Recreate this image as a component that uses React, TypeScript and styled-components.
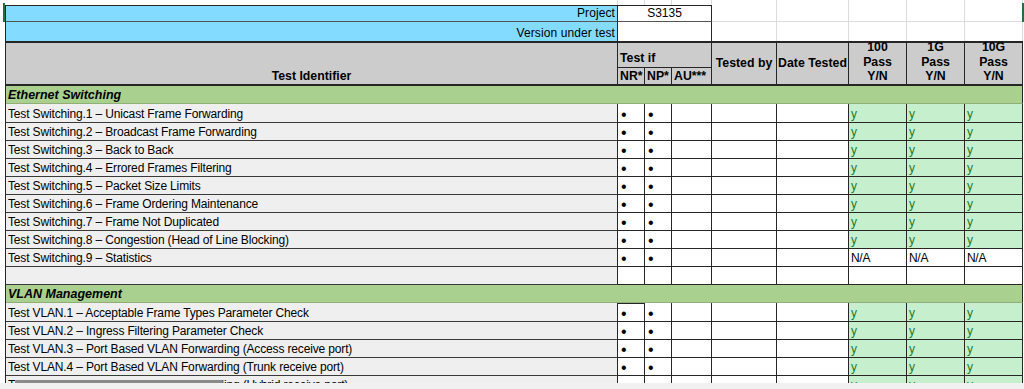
import React from "react";
import styled, { createGlobalStyle, css } from "styled-components";

const GlobalStyle = createGlobalStyle`
  html, body { margin: 0; padding: 0; background: #fff; overflow: hidden; }
  body { font-family: "Liberation Sans", Arial, sans-serif; color: #000; }
`;

const COLS = "612px 27px 27px 40px 65px 72px 58px 58px 58px";
const LINE = "#262626";
const GRID = "#dcdcdc";

const Sheet = styled.div`
  position: relative;
  width: 1024px;
  height: 389px;
  overflow: hidden;
  background: #fff;
  padding: 0 1px 0 5px;
  box-sizing: border-box;
`;

const GhostRow = styled.div`
  display: grid;
  grid-template-columns: ${COLS};
  height: 5px;
  margin-left: 1px;
`;

const GhostCell = styled.div`
  border-right: 1px solid ${GRID};
`;

const Row = styled.div<{ $h: number }>`
  display: grid;
  grid-template-columns: ${COLS};
  height: ${(p) => p.$h}px;
  border-left: 1px solid ${LINE};
  box-sizing: border-box;
`;

const cellBase = css`
  box-sizing: border-box;
  display: flex;
  align-items: flex-end;
  overflow: hidden;
  white-space: nowrap;
  font-size: 12px;
  line-height: 14px;
  padding: 0 2px 1px 2px;
  border-right: 1px solid ${LINE};
  border-bottom: 1px solid ${LINE};
`;

const InfoLabel = styled.div<{ $top?: boolean; $last?: boolean }>`
  ${cellBase};
  justify-content: flex-end;
  background: #83dcff;
  border-top: ${(p) => (p.$top ? `1px solid ${LINE}` : "none")};
  border-bottom: ${(p) => (p.$last ? "none" : `1px solid #555`)};
  letter-spacing: 0.1px;
`;

const InfoValue = styled.div<{ $top?: boolean; $last?: boolean }>`
  ${cellBase};
  grid-column: span 3;
  justify-content: center;
  background: #fff;
  border-top: ${(p) => (p.$top ? `1px solid ${LINE}` : "none")};
  border-bottom: ${(p) => (p.$last ? "none" : `1px solid #555`)};
`;

const SheetCell = styled.div<{ $last?: boolean }>`
  border-right: 1px solid ${GRID};
  border-bottom: ${(p) => (p.$last ? "none" : `1px solid ${GRID}`)};
`;

const Header = styled.div`
  display: grid;
  grid-template-columns: ${COLS};
  grid-template-rows: 25px 16px;
  border-top: 2px solid ${LINE};
  border-bottom: 2px solid ${LINE};
  border-left: 1px solid ${LINE};
  background: #cccccc;
`;

const HeadCell = styled.div<{
  $rows?: number;
  $cols?: number;
  $center?: boolean;
  $middle?: boolean;
  $bottomLine?: boolean;
  $stack?: boolean;
}>`
  box-sizing: border-box;
  display: flex;
  flex-direction: column;
  justify-content: ${(p) => (p.$middle ? "center" : "flex-end")};
  align-items: ${(p) => (p.$center ? "center" : "flex-start")};
  text-align: ${(p) => (p.$center ? "center" : "left")};
  grid-row: span ${(p) => p.$rows ?? 1};
  grid-column: span ${(p) => p.$cols ?? 1};
  border-right: 1px solid ${LINE};
  border-bottom: ${(p) => (p.$bottomLine ? `1px solid ${LINE}` : "none")};
  font-weight: bold;
  font-size: 12.3px;
  line-height: 14.7px;
  padding: 0 2px ${(p) => (p.$bottomLine ? 1 : 0)}px;
  overflow: ${(p) => (p.$stack ? "visible" : "hidden")};
  white-space: nowrap;
`;

const Band = styled.div`
  ${cellBase};
  grid-column: span 9;
  background: #a9d08e;
  border-bottom: 1px solid #8fae7a;
  font-weight: bold;
  font-style: italic;
  font-size: 12.5px;
  padding-left: 2px;
`;

const IdCell = styled.div`
  ${cellBase};
  background: #efefef;
  border-bottom-color: #3a3a3a;
  letter-spacing: -0.15px;
`;

const MarkCell = styled.div<{ $selected?: boolean }>`
  ${cellBase};
  background: #fff;
  font-size: 16px;
  line-height: 14px;
  padding: 0 0 0 3px;
  box-shadow: ${(p) => (p.$selected ? `inset 0 1px 0 ${LINE}` : "none")};
`;

const BlankCell = styled.div`
  ${cellBase};
  background: #fff;
`;

const PassCell = styled.div<{ $ok: boolean }>`
  ${cellBase};
  background: ${(p) => (p.$ok ? "#c6efce" : "#fff")};
  color: ${(p) => (p.$ok ? "#1f7a1f" : "#000")};
  letter-spacing: -0.3px;
`;

const Selection = styled.div<{ $side: "left" | "right" }>`
  position: absolute;
  top: 3px;
  ${(p) => (p.$side === "left" ? "left: 3px;" : "right: 0;")}
  width: 2px;
  height: 19px;
  background: #1e7145;
`;

const ScrollTrack = styled.div`
  position: absolute;
  left: 0;
  right: 0;
  bottom: 0;
  height: 6px;
  background: #f1f1f1;
`;

const ScrollThumb = styled.div`
  position: absolute;
  left: 15px;
  top: -3px;
  width: 208px;
  height: 3px;
  border-radius: 2px;
  background: #8a8a8a;
`;

type Test = { name: string; marks: boolean; pass: string };

const switching: Test[] = [
  { name: "Test Switching.1 \u2013 Unicast Frame Forwarding", marks: true, pass: "y" },
  { name: "Test Switching.2 \u2013 Broadcast Frame Forwarding", marks: true, pass: "y" },
  { name: "Test Switching.3 \u2013 Back to Back", marks: true, pass: "y" },
  { name: "Test Switching.4 \u2013 Errored Frames Filtering", marks: true, pass: "y" },
  { name: "Test Switching.5 \u2013 Packet Size Limits", marks: true, pass: "y" },
  { name: "Test Switching.6 \u2013 Frame Ordering Maintenance", marks: true, pass: "y" },
  { name: "Test Switching.7 \u2013 Frame Not Duplicated", marks: true, pass: "y" },
  { name: "Test Switching.8 \u2013 Congestion (Head of Line Blocking)", marks: true, pass: "y" },
  { name: "Test Switching.9 \u2013 Statistics", marks: true, pass: "N/A" },
  { name: "", marks: false, pass: "" },
];
const switchingHeights = [19, 18, 18, 18, 18, 18, 18, 18, 18, 18];

const vlan: Test[] = [
  { name: "Test VLAN.1 \u2013 Acceptable Frame Types Parameter Check", marks: true, pass: "y" },
  { name: "Test VLAN.2 \u2013 Ingress Filtering Parameter Check", marks: true, pass: "y" },
  { name: "Test VLAN.3 \u2013 Port Based VLAN Forwarding (Access receive port)", marks: true, pass: "y" },
  { name: "Test VLAN.4 \u2013 Port Based VLAN Forwarding (Trunk receive port)", marks: true, pass: "y" },
  { name: "Test VLAN.5 \u2013 Port Based VLAN Forwarding (Hybrid receive port)", marks: true, pass: "y" },
];
const vlanHeights = [19, 18, 18, 18, 18];

function TestRow({ t, h, selected }: { t: Test; h: number; selected?: boolean }) {
  const ok = t.pass === "y";
  return (
    <Row $h={h}>
      <IdCell>{t.name}</IdCell>
      <MarkCell $selected={selected}>{t.marks ? "\u2022" : ""}</MarkCell>
      <MarkCell>{t.marks ? "\u2022" : ""}</MarkCell>
      <BlankCell />
      <BlankCell />
      <BlankCell />
      <PassCell $ok={ok}>{t.pass}</PassCell>
      <PassCell $ok={ok}>{t.pass}</PassCell>
      <PassCell $ok={ok}>{t.pass}</PassCell>
    </Row>
  );
}

function PassHead({ speed }: { speed: string }) {
  return (
    <HeadCell $rows={2} $center $stack>
      <span>{speed}</span>
      <span>Pass</span>
      <span>Y/N</span>
    </HeadCell>
  );
}

export default function App() {
  return (
    <>
      <GlobalStyle />
      <Sheet>
        <GhostRow>
          {Array.from({ length: 9 }).map((_, i) => (
            <GhostCell key={i} />
          ))}
        </GhostRow>
        <Row $h={17}>
          <InfoLabel $top>Project</InfoLabel>
          <InfoValue $top>S3135</InfoValue>
          <SheetCell />
          <SheetCell />
          <SheetCell />
          <SheetCell />
          <SheetCell />
        </Row>
        <Row $h={19}>
          <InfoLabel $last>Version under test</InfoLabel>
          <InfoValue $last />
          <SheetCell $last />
          <SheetCell $last />
          <SheetCell $last />
          <SheetCell $last />
          <SheetCell $last />
        </Row>
        <Header>
          <HeadCell $rows={2} $center>Test Identifier</HeadCell>
          <HeadCell $cols={3} $bottomLine>Test if</HeadCell>
          <HeadCell $rows={2} $center $middle>Tested by</HeadCell>
          <HeadCell $rows={2} $center $middle>Date Tested</HeadCell>
          <PassHead speed="100" />
          <PassHead speed="1G" />
          <PassHead speed="10G" />
          <HeadCell>NR*</HeadCell>
          <HeadCell>NP*</HeadCell>
          <HeadCell>AU***</HeadCell>
        </Header>
        <Row $h={18}>
          <Band>Ethernet Switching</Band>
        </Row>
        {switching.map((t, i) => (
          <TestRow key={i} t={t} h={switchingHeights[i]} />
        ))}
        <Row $h={18}>
          <Band>VLAN Management</Band>
        </Row>
        {vlan.map((t, i) => (
          <TestRow key={i} t={t} h={vlanHeights[i]} selected={i === 0} />
        ))}
        <Selection $side="left" />
        <Selection $side="right" />
        <ScrollTrack>
          <ScrollThumb />
        </ScrollTrack>
      </Sheet>
    </>
  );
}
